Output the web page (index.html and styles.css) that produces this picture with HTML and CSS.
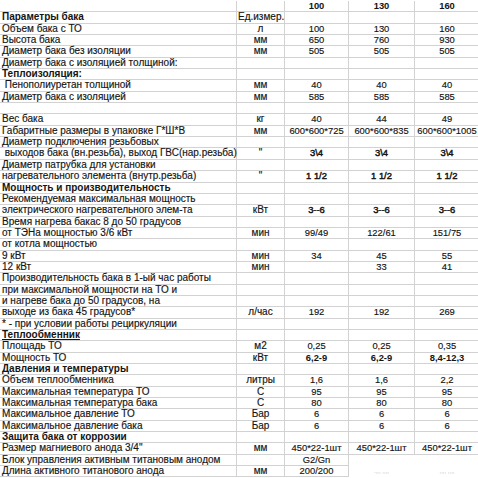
FILE: index.html
```html
<!DOCTYPE html>
<html lang="ru">
<head>
<meta charset="utf-8">
<title>Параметры бака</title>
<link rel="stylesheet" href="styles.css">
</head>
<body>
<div class="sheet">
  <div class="row"><div class="c l"></div><div class="c u"></div><div class="c v b">100</div><div class="c v b">130</div><div class="c v b">160</div></div>
  <div class="row"><div class="c l b">Параметры бака</div><div class="c u ul-left">Ед.измер.</div><div class="c v"></div><div class="c v"></div><div class="c v"></div></div>
  <div class="row"><div class="c l">Объем бака с ТО</div><div class="c u">л</div><div class="c v">100</div><div class="c v">130</div><div class="c v">160</div></div>
  <div class="row"><div class="c l">Высота бака</div><div class="c u">мм</div><div class="c v">650</div><div class="c v">760</div><div class="c v">930</div></div>
  <div class="row"><div class="c l">Диаметр бака без изоляции</div><div class="c u">мм</div><div class="c v">505</div><div class="c v">505</div><div class="c v">505</div></div>
  <div class="row"><div class="c l">Диаметр бака с изоляцией толщиной:</div><div class="c u"></div><div class="c v"></div><div class="c v"></div><div class="c v"></div></div>
  <div class="row"><div class="c l b">Теплоизоляция:</div><div class="c u"></div><div class="c v"></div><div class="c v"></div><div class="c v"></div></div>
  <div class="row"><div class="c l"> Пенополиуретан толщиной</div><div class="c u">мм</div><div class="c v">40</div><div class="c v">40</div><div class="c v">40</div></div>
  <div class="row"><div class="c l">Диаметр бака с изоляцией</div><div class="c u">мм</div><div class="c v">585</div><div class="c v">585</div><div class="c v">585</div></div>
  <div class="row"><div class="c l"></div><div class="c u"></div><div class="c v"></div><div class="c v"></div><div class="c v"></div></div>
  <div class="row"><div class="c l">Вес бака</div><div class="c u">кг</div><div class="c v">40</div><div class="c v">44</div><div class="c v">49</div></div>
  <div class="row"><div class="c l">Габаритные размеры в упаковке Г*Ш*В</div><div class="c u">мм</div><div class="c v">600*600*725</div><div class="c v">600*600*835</div><div class="c v">600*600*1005</div></div>
  <div class="row"><div class="c l">Диаметр подключения резьбовых</div><div class="c u"></div><div class="c v"></div><div class="c v"></div><div class="c v"></div></div>
  <div class="row"><div class="c l"> выходов бака (вн.резьба), выход ГВС(нар.резьба)</div><div class="c u">"</div><div class="c v m">3\4</div><div class="c v m">3\4</div><div class="c v m">3\4</div></div>
  <div class="row"><div class="c l">Диаметр патрубка для установки</div><div class="c u"></div><div class="c v"></div><div class="c v"></div><div class="c v"></div></div>
  <div class="row"><div class="c l">нагревательного элемента (внутр.резьба)</div><div class="c u">"</div><div class="c v m">1 1/2</div><div class="c v m">1 1/2</div><div class="c v m">1 1/2</div></div>
  <div class="row"><div class="c l b">Мощность и производительность</div><div class="c u"></div><div class="c v"></div><div class="c v"></div><div class="c v"></div></div>
  <div class="row"><div class="c l">Рекомендуемая максимальная мощность</div><div class="c u"></div><div class="c v"></div><div class="c v"></div><div class="c v"></div></div>
  <div class="row"><div class="c l">электрического нагревательного элем-та</div><div class="c u">кВт</div><div class="c v m">3--6</div><div class="c v m">3--6</div><div class="c v m">3--6</div></div>
  <div class="row"><div class="c l">Время нагрева бакас 8 до 50 градусов</div><div class="c u"></div><div class="c v"></div><div class="c v"></div><div class="c v"></div></div>
  <div class="row"><div class="c l">от ТЭНа мощностью 3/6 кВт</div><div class="c u">мин</div><div class="c v">99/49</div><div class="c v">122/61</div><div class="c v">151/75</div></div>
  <div class="row"><div class="c l">от котла мощностью</div><div class="c u"></div><div class="c v"></div><div class="c v"></div><div class="c v"></div></div>
  <div class="row"><div class="c l">9 кВт</div><div class="c u">мин</div><div class="c v">34</div><div class="c v">45</div><div class="c v">55</div></div>
  <div class="row"><div class="c l">12 кВт</div><div class="c u">мин</div><div class="c v"></div><div class="c v">33</div><div class="c v">41</div></div>
  <div class="row"><div class="c l">Производительность бака в 1-ый час работы</div><div class="c u"></div><div class="c v"></div><div class="c v"></div><div class="c v"></div></div>
  <div class="row"><div class="c l">при максимальной мощности на ТО и</div><div class="c u"></div><div class="c v"></div><div class="c v"></div><div class="c v"></div></div>
  <div class="row"><div class="c l">и нагреве бака до 50 градусов, на</div><div class="c u"></div><div class="c v"></div><div class="c v"></div><div class="c v"></div></div>
  <div class="row"><div class="c l">выходе из бака 45 градусов*</div><div class="c u">л/час</div><div class="c v">192</div><div class="c v">192</div><div class="c v">269</div></div>
  <div class="row"><div class="c l">* - при условии работы рециркуляции</div><div class="c u"></div><div class="c v"></div><div class="c v"></div><div class="c v"></div></div>
  <div class="row"><div class="c l b"><span class="ul">Теплообменник</span></div><div class="c u"></div><div class="c v"></div><div class="c v"></div><div class="c v"></div></div>
  <div class="row"><div class="c l">Площадь ТО</div><div class="c u">м2</div><div class="c v">0,25</div><div class="c v">0,25</div><div class="c v">0,35</div></div>
  <div class="row"><div class="c l">Мощность ТО</div><div class="c u">кВт</div><div class="c v b">6,2-9</div><div class="c v b">6,2-9</div><div class="c v b">8,4-12,3</div></div>
  <div class="row"><div class="c l b">Давления и температуры</div><div class="c u"></div><div class="c v"></div><div class="c v"></div><div class="c v"></div></div>
  <div class="row"><div class="c l">Объем теплообменника</div><div class="c u">литры</div><div class="c v">1,6</div><div class="c v">1,6</div><div class="c v">2,2</div></div>
  <div class="row"><div class="c l">Максимальная температура ТО</div><div class="c u">С</div><div class="c v">95</div><div class="c v">95</div><div class="c v">95</div></div>
  <div class="row"><div class="c l">Максимальная температура бака</div><div class="c u">С</div><div class="c v">80</div><div class="c v">80</div><div class="c v">80</div></div>
  <div class="row"><div class="c l">Максимальное давление ТО</div><div class="c u">Бар</div><div class="c v">6</div><div class="c v">6</div><div class="c v">6</div></div>
  <div class="row"><div class="c l">Максимальное давление бака</div><div class="c u">Бар</div><div class="c v">6</div><div class="c v">6</div><div class="c v">6</div></div>
  <div class="row"><div class="c l b">Защита бака от коррозии</div><div class="c u"></div><div class="c v"></div><div class="c v"></div><div class="c v"></div></div>
  <div class="row"><div class="c l">Размер магниевого анода 3/4"</div><div class="c u">мм</div><div class="c v">450*22-1шт</div><div class="c v">450*22-1шт</div><div class="c v">450*22-1шт</div></div>
  <div class="row"><div class="c l">Блок управления активным титановым анодом</div><div class="c u"></div><div class="c v">G2/Gn</div><div class="c v open"></div><div class="c v open"></div></div>
  <div class="row"><div class="c l">Длина активного титанового анода</div><div class="c u">мм</div><div class="c v">200/200</div><div class="c v open"><span class="ghost">.,,, ,,,,</span></div><div class="c v open"><span class="ghost">,,,, ,,,,</span></div></div>
</div>
</body>
</html>
```

FILE: styles.css
```css
html, body {
  margin: 0;
  padding: 0;
  background: #ffffff;
}

body {
  padding-top: 1px;
  font-family: "Liberation Sans", Arial, sans-serif;
  font-size: 10px;
  color: #141414;
  -webkit-text-stroke: 0.15px #141414;
}

.sheet {
  width: 480px;
}

.row {
  display: grid;
  grid-template-columns: 237px 48px 64px 66px 65px;
  height: 11.35px;
}

.c {
  box-sizing: border-box;
  border-right: 1px solid #d2d2d2;
  border-bottom: 1px solid #d2d2d2;
  line-height: 10.35px;
  white-space: pre;
  overflow: visible;
}

.l {
  padding-left: 2px;
}

.u {
  text-align: center;
}

.v {
  text-align: center;
  font-size: 9.4px;
}

.m {
  -webkit-text-stroke: 0.45px #141414;
}

.ul-left {
  text-align: left;
  padding-left: 1px;
}

.b {
  font-weight: bold;
  -webkit-text-stroke: 0;
}

.ul {
  text-decoration: underline;
}

.open {
  border-bottom-color: transparent;
  border-right-color: transparent;
}

.ghost {
  font-size: 6px;
  line-height: 10.35px;
  color: #a8a8a8;
  vertical-align: top;
  -webkit-text-stroke: 0;
}
```
